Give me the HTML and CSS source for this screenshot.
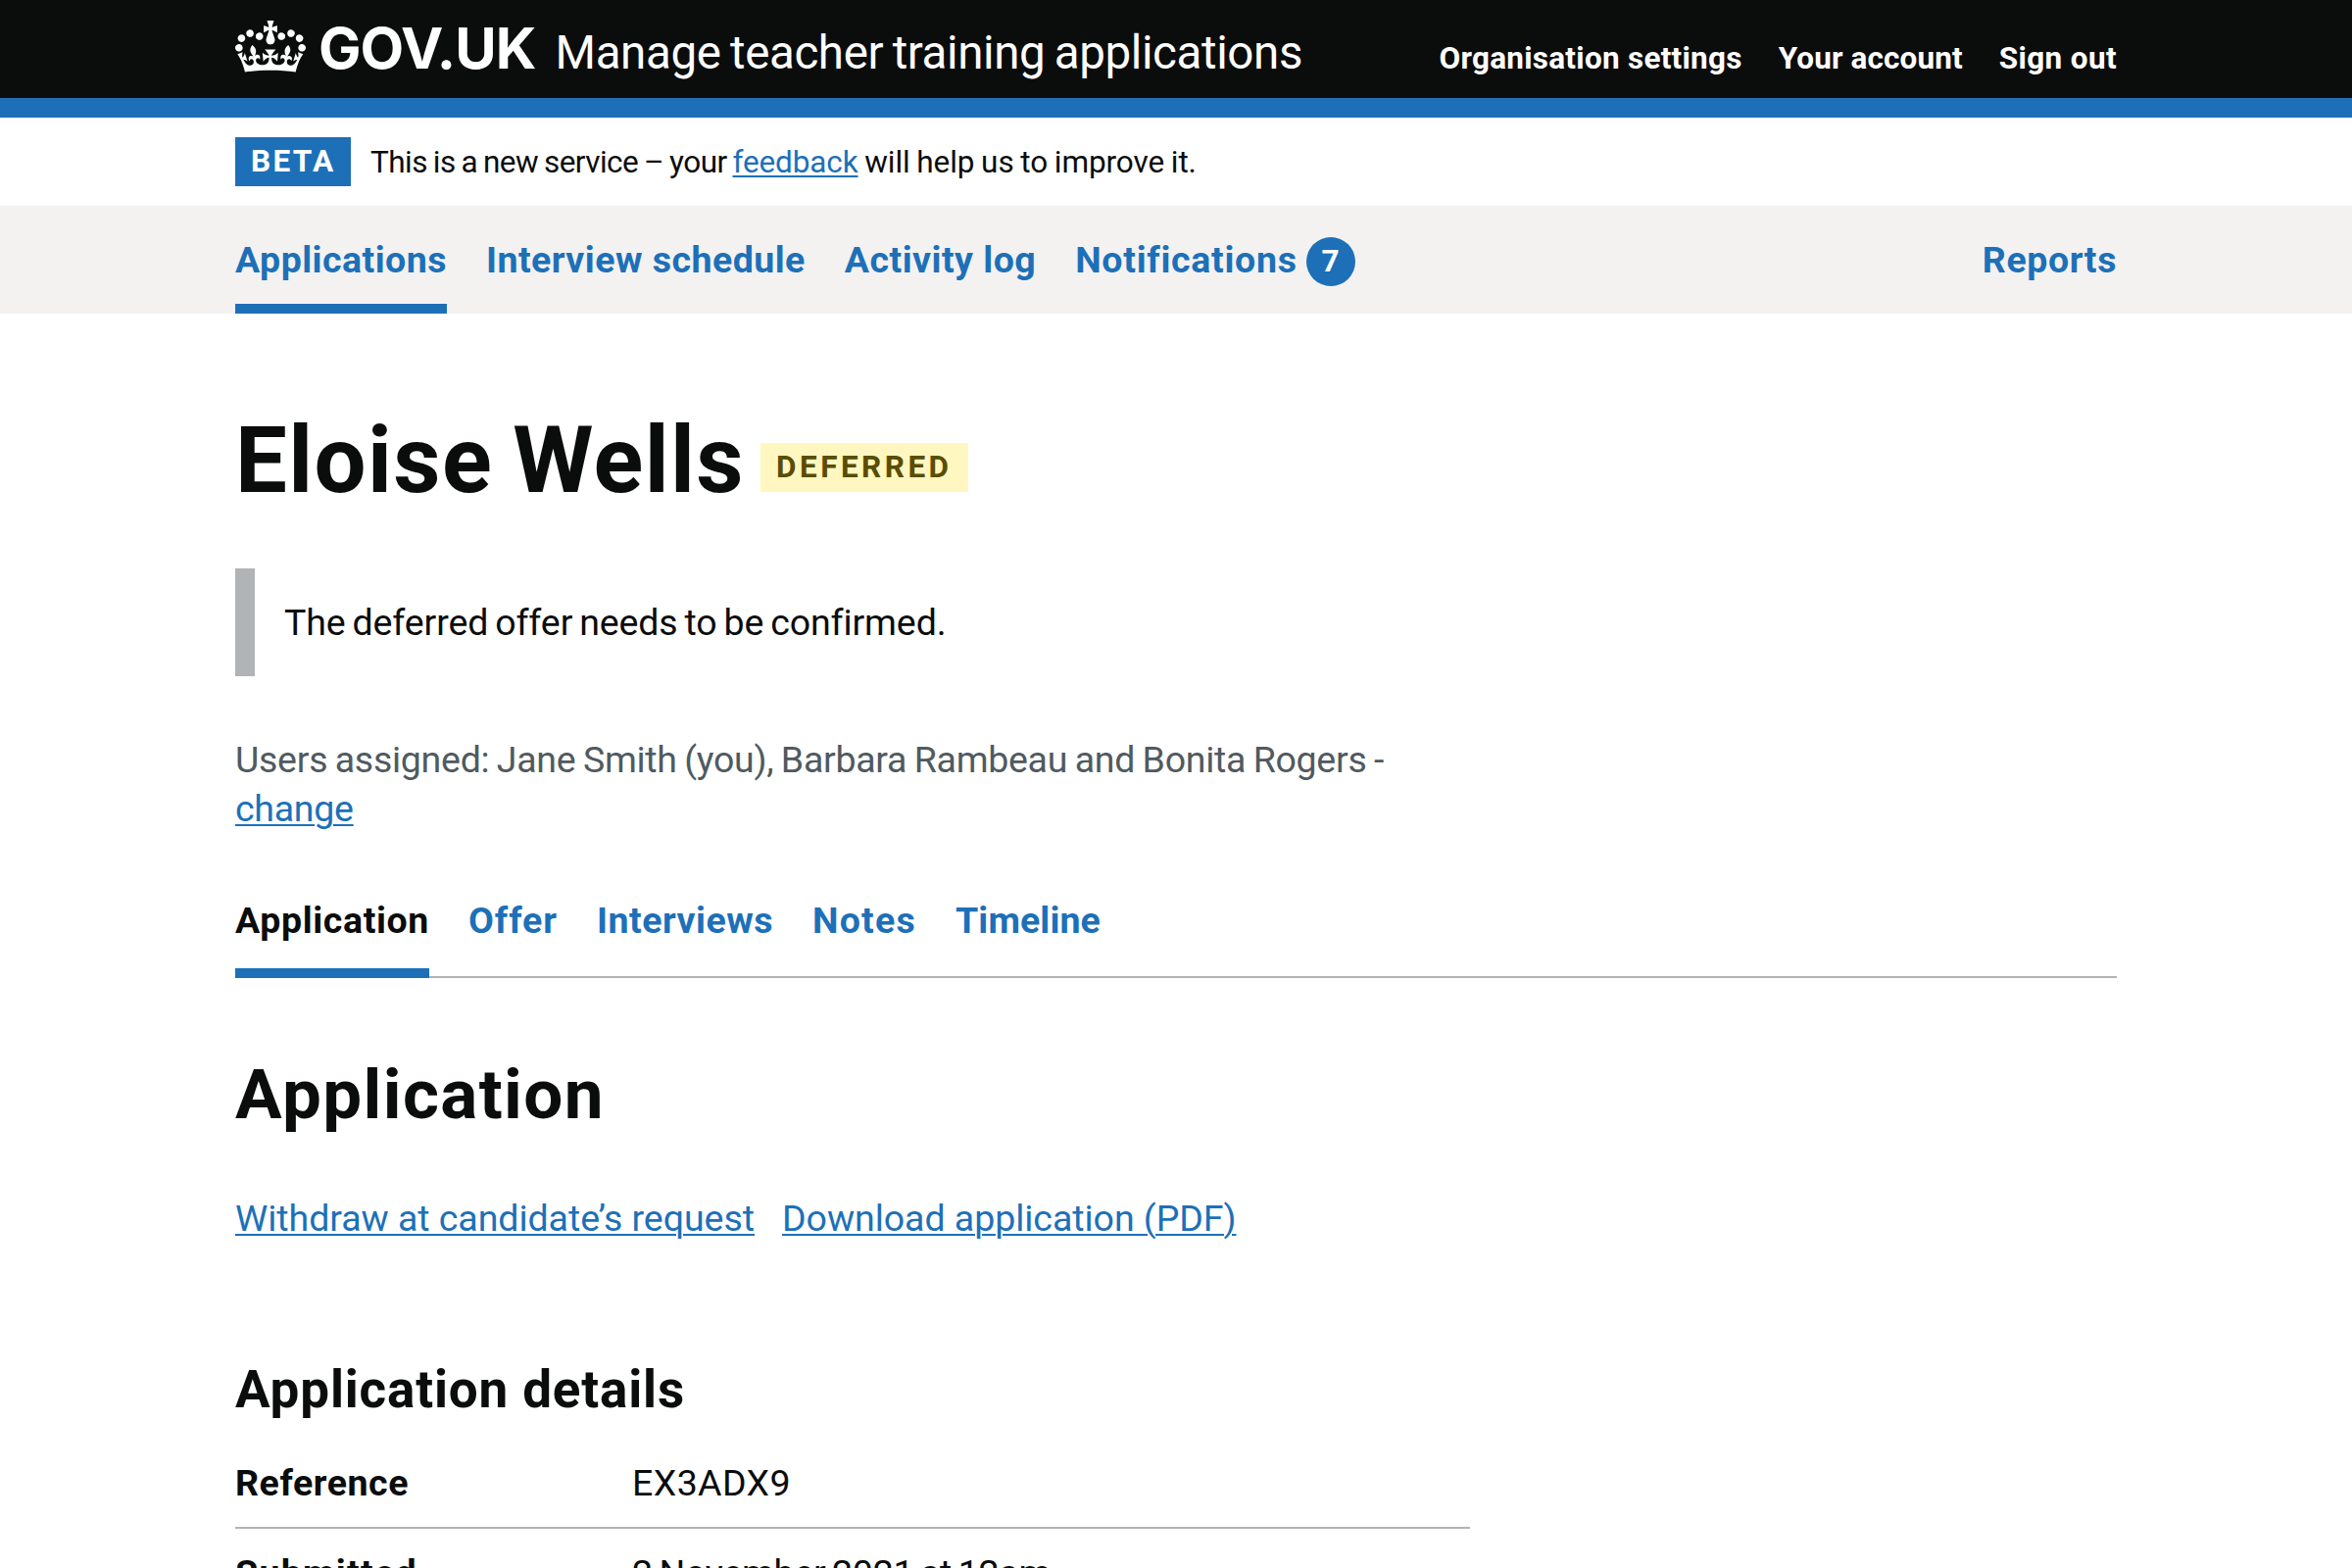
FILE: index.html
```html
<!DOCTYPE html>
<html lang="en">
<head>
<meta charset="utf-8">
<title>Eloise Wells - Manage teacher training applications</title>
<link rel="stylesheet" href="styles.css">
</head>
<body>
<header class="header">
  <div class="container header-row">
    <svg class="crown" viewBox="0 0 132 97" aria-hidden="true"><path fill="currentColor" fill-rule="evenodd" d="M25 30.2c3.5 1.5 7.7-.2 9.1-3.7 1.5-3.6-.2-7.8-3.9-9.2-3.6-1.4-7.6.3-9.1 3.9-1.4 3.5.3 7.5 3.9 9zM9 39.5c3.6 1.5 7.8-.2 9.2-3.7 1.5-3.6-.2-7.8-3.9-9.1-3.6-1.5-7.6.2-9.1 3.8-1.4 3.5.3 7.5 3.8 9zM4.4 57.2c3.5 1.5 7.7-.2 9.1-3.8 1.5-3.6-.2-7.7-3.9-9.1-3.5-1.5-7.6.3-9.1 3.8-1.4 3.5.3 7.6 3.9 9.1zm38.3-21.4c3.5 1.5 7.7-.2 9.1-3.8 1.5-3.6-.2-7.7-3.9-9.1-3.6-1.5-7.6.3-9.1 3.8-1.3 3.6.4 7.7 3.9 9.1zm64.4-5.6c-3.6 1.5-7.8-.2-9.1-3.7-1.5-3.6.2-7.8 3.8-9.2 3.6-1.4 7.7.3 9.2 3.9 1.3 3.5-.4 7.5-3.9 9zm15.9 9.3c-3.6 1.5-7.7-.2-9.1-3.7-1.5-3.6.2-7.8 3.7-9.1 3.6-1.5 7.7.2 9.2 3.8 1.5 3.5-.3 7.5-3.8 9zm4.7 17.7c-3.6 1.5-7.8-.2-9.2-3.8-1.5-3.6.2-7.7 3.9-9.1 3.6-1.5 7.7.3 9.2 3.8 1.3 3.5-.4 7.6-3.9 9.1zM89.3 35.8c-3.6 1.5-7.8-.2-9.2-3.8-1.4-3.6.2-7.7 3.9-9.1 3.6-1.5 7.7.3 9.2 3.8 1.4 3.6-.3 7.7-3.9 9.1zM69.7 17.7l8.9 4.7V9.3l-8.9 2.8c-.2-.3-.5-.6-.9-.9L72.4 0H59.6l3.5 11.2c-.3.3-.6.5-.9.9l-8.8-2.8v13.1l8.8-4.7c.3.3.6.7.9.9l-5 15.4v.1c-.2.8-.4 1.6-.4 2.4 0 4.1 3.1 7.5 7 8.1h.2c.3 0 .7.1 1 .1.4 0 .7 0 1-.1h.2c4-.6 7.1-4.1 7.1-8.1 0-.8-.1-1.7-.4-2.4V34l-5.1-15.4c.4-.2.7-.6 1-.9zM66 92.8c16.9 0 32.8 1.1 47.1 3.2 4-16.9 8.9-26.7 14-33.5l-9.6-3.4c1 4.9 1.1 7.2 0 10.2-1.5-1.4-3-4.3-4.2-8.7L108.6 76c2.8-2 5-3.2 7.5-3.3-4.4 9.4-10 11.9-13.6 11.2-4.3-.8-6.3-4.6-5.6-7.9 1-4.7 5.7-5.9 8-.5 4.3-8.7-3-11.4-7.6-8.8 7.1-7.2 7.9-13.5 2.1-21.1-8 6.1-8.1 12.3-4.5 20.8-4.7-5.4-12.1-2.5-9.5 6.2 3.4-5.2 7.9-2 7.2 3.1-.6 4.3-6.4 7.8-13.5 7.2-10.3-.9-10.9-8-11.2-13.8 2.5-.5 7.1 1.8 11 7.3L80.2 60c-4.1 4.4-8 5.3-12.3 5.4 1.4-4.4 8-11.6 8-11.6H55.5s6.4 7.2 7.9 11.6c-4.2-.1-8-1-12.3-5.4l1.4 16.4c3.9-5.5 8.5-7.7 10.9-7.3-.3 5.8-.9 12.8-11.1 13.8-7.2.6-12.9-2.9-13.5-7.2-.7-5 3.8-8.3 7.1-3.1 2.7-8.7-4.6-11.6-9.4-6.2 3.7-8.5 3.6-14.7-4.6-20.8-5.8 7.6-5 13.9 2.2 21.1-4.7-2.6-11.9.1-7.7 8.8 2.3-5.5 7.1-4.2 8.1.5.7 3.3-1.3 7.1-5.7 7.9-3.5.7-9-1.8-13.5-11.2 2.5.1 4.7 1.3 7.5 3.3l-4.7-15.4c-1.2 4.4-2.7 7.2-4.3 8.7-1.1-3-.9-5.3 0-10.2l-9.5 3.4c5 6.9 9.9 16.7 14 33.5 14.8-2.1 30.8-3.2 47.7-3.2z"/></svg>
    <span class="logotype">GOV.UK</span>
    <span class="service-name">Manage teacher training applications</span>
    <nav class="account-nav">
      <a class="account-settings">Organisation settings</a>
      <a class="account-user">Your account</a>
      <a class="account-signout">Sign out</a>
    </nav>
  </div>
</header>
<div class="container phase">
  <strong class="tag tag-beta">Beta</strong>
  <span class="phase-text"><span class="phase-intro">This is a new service – your </span><a class="link">feedback</a><span class="phase-rest"> will help us to improve it.</span></span>
</div>
<nav class="primary">
  <div class="container primary-row">
    <a class="current">Applications</a>
    <a>Interview schedule</a>
    <a>Activity log</a>
    <a class="notif"><span class="notif-label">Notifications</span><span class="count">7</span></a>
    <a class="reports">Reports</a>
  </div>
</nav>
<main class="container main">
  <h1 class="title">Eloise Wells<strong class="tag tag-deferred">Deferred</strong></h1>
  <div class="inset">The deferred offer needs to be confirmed.</div>
  <p class="assigned">Users assigned: Jane Smith (you), Barbara Rambeau and Bonita Rogers -<br><a class="link">change</a></p>
  <nav class="tabs">
    <a class="current">Application</a>
    <a class="tab-offer">Offer</a>
    <a class="tab-interviews">Interviews</a>
    <a class="tab-notes">Notes</a>
    <a class="tab-timeline">Timeline</a>
  </nav>
  <h2 class="heading-l">Application</h2>
  <div class="actions"><a class="link">Withdraw at candidate’s request</a><a class="link">Download application (PDF)</a></div>
  <h3 class="heading-m">Application details</h3>
  <dl class="summary">
    <div class="row"><dt>Reference</dt><dd class="reference">EX3ADX9</dd></div>
    <div class="row"><dt class="submitted">Submitted</dt><dd class="date">2 November 2021 at 12am</dd></div>
  </dl>
</main>
</body>
</html>
```
FILE: styles.css
```css
* { box-sizing: border-box; margin: 0; padding: 0; }
html { background: #fff; overflow: hidden; height: 1600px; }
body { height: 1600px; overflow: hidden; font-family: Roboto, "Noto Sans", sans-serif; font-size: 37.5px; line-height: 50px; color: #0b0c0c; white-space: nowrap; }
.container { width: 1920px; margin: 0 auto; }
a { color: #1d70b8; text-decoration: none; }
.link { text-decoration: underline; text-decoration-thickness: 2px; text-underline-offset: 3px; }

.header { height: 120px; background: #0b0c0c; border-bottom: 20px solid #1d70b8; color: #fff; }
.header-row { display: flex; height: 100px; align-items: baseline; padding-top: 14px; }
.crown { width: 72px; height: 53px; align-self: flex-start; margin-top: 7px; flex: none; }
.logotype { font: 700 58px/70px Inter, sans-serif; margin-left: 13px; letter-spacing: -.016em; }
.service-name { font-size: 47.5px; line-height: 60px; margin-left: 20px; letter-spacing: -.0082em; word-spacing: -.04em; }
.account-nav { display: flex; gap: 37px; margin-left: auto; font-size: 31.5px; font-weight: 700; line-height: 50px; }
.account-nav a { color: #fff; }
.account-settings { letter-spacing: .0084em; }
.account-user { letter-spacing: .0034em; }
.account-signout { letter-spacing: .0117em; }

.phase { display: flex; height: 90px; padding-top: 20px; font-size: 31.5px; }
.phase-text { padding-top: 1px; white-space: pre; letter-spacing: -.0041em; }
.phase-intro { letter-spacing: -.017em; word-spacing: -.045em; }
.phase-rest { letter-spacing: -.003em; word-spacing: -.03em; }
.tag { display: block; height: 50px; font-size: 31.5px; line-height: 50px; font-weight: 700; text-transform: uppercase; padding-left: 16px; }
.tag-beta { width: 118px; background: #1d70b8; color: #fff; margin-right: 20px; letter-spacing: .075em; }

.primary { height: 110px; background: #f3f2f1; font-weight: 700; letter-spacing: .0126em; }
.primary-row { display: flex; gap: 40px; height: 110px; line-height: 110px; }
.primary-row .current { border-bottom: 10px solid #1d70b8; }
.notif { display: flex; align-items: center; gap: 9px; }
.notif-label { letter-spacing: .0189em; }
.count { width: 50px; height: 50px; margin-top: 4px; border-radius: 25px; background: #1d70b8; color: #fff; text-align: center; font-size: 31.5px; line-height: 50px; }
.primary-row .reports { margin-left: auto; letter-spacing: .0155em; }

.title { display: flex; align-items: flex-start; height: 98px; margin-top: 100px; font-size: 94px; line-height: 100px; letter-spacing: .0151em; word-spacing: -.05em; }
.tag-deferred { width: 212px; background: #fff7bf; color: #594d00; margin: 32px 0 0 16px; letter-spacing: .11em; }
.inset { height: 110px; margin-top: 62px; border-left: 20px solid #b1b4b6; padding: 30px; letter-spacing: -.003em; word-spacing: -.06em; }
.assigned { margin-top: 60px; color: #505a5f; letter-spacing: -.0075em; word-spacing: -.04em; }
.tabs { display: flex; gap: 40px; height: 108px; margin-top: 40px; padding-top: 24px; font-weight: 700; letter-spacing: .0169em; box-shadow: inset 0 -2px #b1b4b6; }
.tabs .current { color: #0b0c0c; border-bottom: 10px solid #1d70b8; }
.tab-offer { letter-spacing: .0253em; }
.tab-interviews { letter-spacing: .0134em; }
.tab-notes { letter-spacing: .0328em; }
.tab-timeline { letter-spacing: .0033em; }
.heading-l { margin-top: 79px; font-size: 71px; line-height: 80px; letter-spacing: .0195em; }
.actions { display: flex; gap: 28px; margin-top: 61px; letter-spacing: -.0012em; }
.heading-m { margin-top: 120px; font-size: 53px; line-height: 60px; letter-spacing: .0157em; }
.summary { width: 1260px; margin-top: 40px; }
.row { display: flex; height: 72px; border-bottom: 2px solid #b1b4b6; }
.row + .row { height: 92px; padding-top: 20px; }
.row dt { width: 405px; font-weight: 700; letter-spacing: .0149em; }
.row .submitted { letter-spacing: .0345em; }
.reference { letter-spacing: .0108em; }
.date { letter-spacing: -.008em; word-spacing: -.06em; }
```
